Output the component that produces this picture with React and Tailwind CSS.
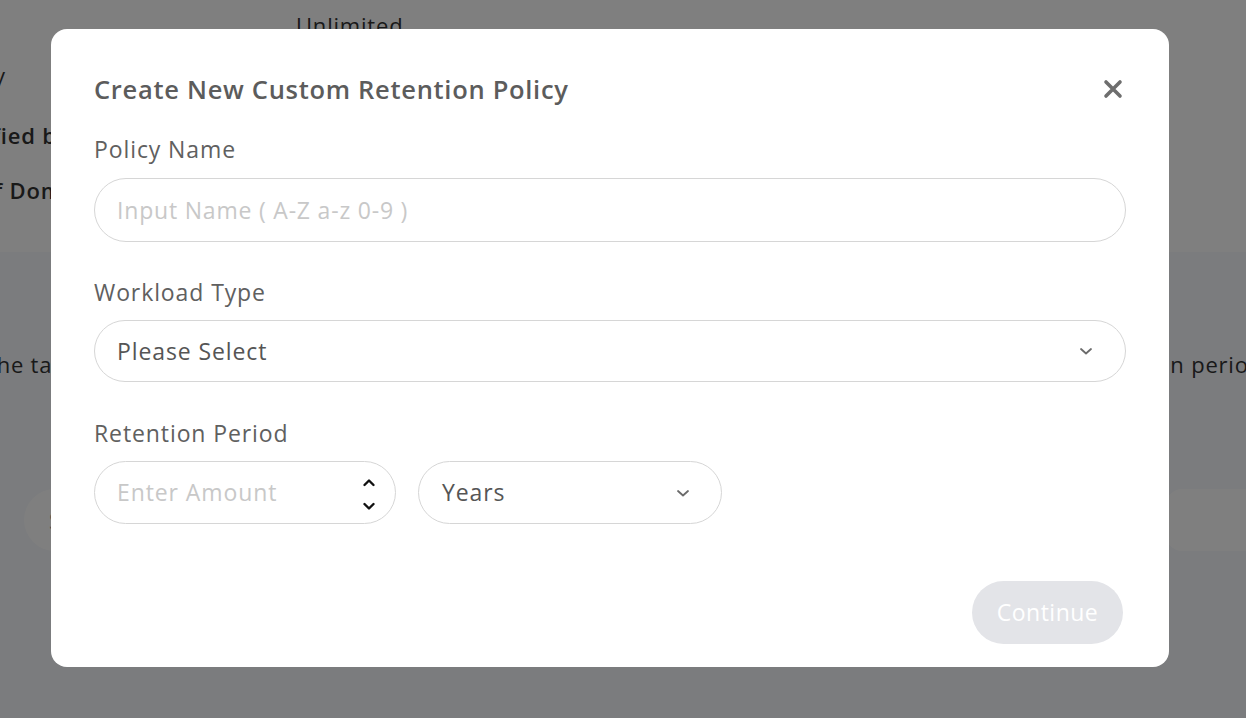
import React from 'react';

const font = { fontFamily: '"Open Sans", "Noto Sans", sans-serif' };

const Chevron = ({ className = '' }) => (
  <svg className={className} width="14" height="10" viewBox="0 0 14 10" fill="none">
    <path d="M2 3l5 4.5L12 3" stroke="#6b6b6b" strokeWidth="1.8" strokeLinecap="round" strokeLinejoin="round" />
  </svg>
);

const Spinner = () => (
  <div className="mt-[3px] flex flex-col items-center gap-[15px]">
    <svg width="14" height="9" viewBox="0 0 14 9" fill="none">
      <path d="M2.5 7l4.5-4.5L11.5 7" stroke="#111" strokeWidth="2.4" strokeLinecap="round" strokeLinejoin="round" />
    </svg>
    <svg width="14" height="9" viewBox="0 0 14 9" fill="none">
      <path d="M2.5 2l4.5 4.5L11.5 2" stroke="#111" strokeWidth="2.4" strokeLinecap="round" strokeLinejoin="round" />
    </svg>
  </div>
);

const Backdrop = () => (
  <div className="h-[718px] w-full overflow-hidden bg-[#f6f8fc]" style={font}>
    <div className="h-[252px] bg-white text-[22px] tracking-[0.8px] text-[#333]">
      <div className="pl-[296px] pt-[10px] leading-[30px]">Unlimited</div>
      <div className="-ml-[6px] mt-[20px] leading-[30px]">y</div>
      <div className="-ml-[8px] mt-[30px] font-semibold leading-[30px]">fied by</div>
      <div className="-ml-[20px] mt-[25px] font-semibold leading-[30px]">of Domain</div>
    </div>
    <div className="flex justify-between pt-[96px] text-[22px] tracking-[0.8px] text-[#333]">
      <span className="-ml-[12px]">the table</span>
      <span className="mr-[-17px]">n period</span>
    </div>
    <div className="mt-[108px] flex items-center justify-between">
      <div className="ml-[24px] flex h-[62px] w-[62px] items-center justify-center rounded-full bg-[#ffffff] text-[22px] text-[#999]">S</div>
      <div className="-mr-[40px] h-[62px] w-[120px] rounded-[16px] bg-white" />
    </div>
  </div>
);

export default function App() {
  return (
    <div className="relative h-[718px] w-full overflow-hidden">
      <Backdrop />
      <div className="absolute inset-0 bg-black/50" />
      <div className="absolute left-[51px] top-[29px] flex h-[638px] w-[1118px] flex-col rounded-[16px] bg-white px-[43px] pt-[44px]" style={font}>
        <div className="flex items-center justify-between">
          <h2 className="text-[25.5px] font-semibold leading-[32px] tracking-[0.7px] text-[#5c5c5c]">Create New Custom Retention Policy</h2>
          <svg width="20" height="20" viewBox="0 0 20 20" className="mr-[3px]">
            <path d="M3 3l14 14M17 3L3 17" stroke="#6e6e6e" strokeWidth="3.6" strokeLinecap="round" />
          </svg>
        </div>

        <label className="mt-[29px] text-[23px] leading-[30px] tracking-[0.9px] text-[#606060]">Policy Name</label>
        <div className="mt-[14px] flex h-[64px] items-center rounded-full border border-[#d6d6d6] px-[22px] text-[23px] tracking-[0.8px] text-[#c8c8c8]">
          Input Name ( A-Z a-z 0-9 )
        </div>

        <label className="mt-[35px] text-[23px] leading-[30px] tracking-[0.9px] text-[#606060]">Workload Type</label>
        <div className="mt-[13px] flex h-[62px] items-center justify-between rounded-full border border-[#d6d6d6] pl-[22px] pr-[32px] text-[23px] tracking-[0.9px] text-[#555]">
          <span>Please Select</span>
          <Chevron />
        </div>

        <label className="mt-[36px] text-[23px] leading-[30px] tracking-[0.9px] text-[#606060]">Retention Period</label>
        <div className="mt-[13px] flex gap-[22px]">
          <div className="flex h-[63px] w-[302px] items-center justify-between rounded-full border border-[#d6d6d6] pl-[22px] pr-[19px] text-[23px] tracking-[0.9px] text-[#c8c8c8]">
            <span>Enter Amount</span>
            <Spinner />
          </div>
          <div className="flex h-[63px] w-[304px] items-center justify-between rounded-full border border-[#d6d6d6] pl-[23px] pr-[31px] text-[23px] tracking-[0.9px] text-[#555]">
            <span>Years</span>
            <Chevron />
          </div>
        </div>

        <div className="mt-[57px] flex justify-end">
          <button className="mr-[3px] h-[63px] w-[151px] rounded-full bg-[#e3e4e8] text-[23px] tracking-[0.5px] text-white">Continue</button>
        </div>
      </div>
    </div>
  );
}
